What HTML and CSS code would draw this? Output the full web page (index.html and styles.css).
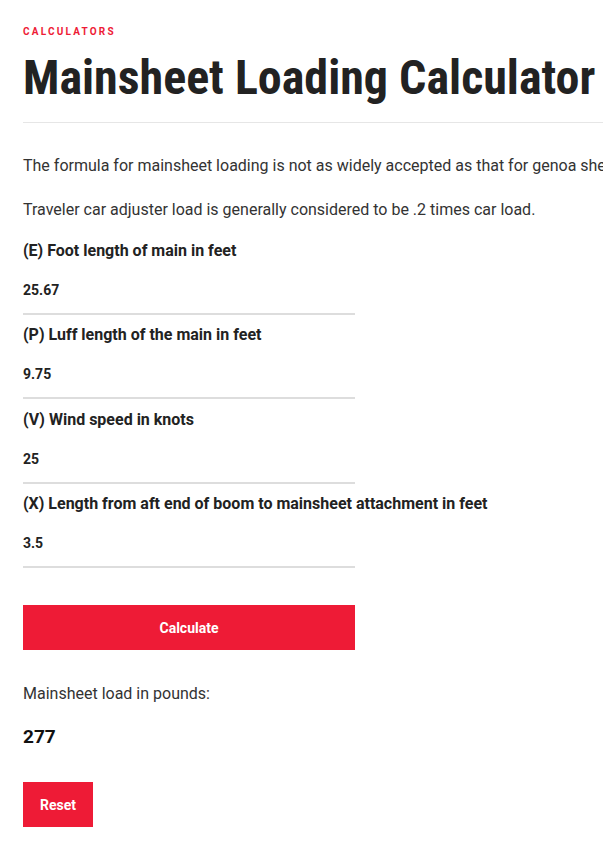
FILE: index.html
```html
<!DOCTYPE html>
<html lang="en">
<head>
<meta charset="utf-8">
<title>Mainsheet Loading Calculator</title>
<link rel="stylesheet" href="styles.css">
</head>
<body>
<main class="page">
  <div class="eyebrow">CALCULATORS</div>
  <h1 class="title">Mainsheet Loading Calculator</h1>
  <hr class="rule">
  <p class="text nowrap">The formula for mainsheet loading is not as widely accepted as that for genoa sheet loading, but it is a reasonable guide.</p>
  <p class="text">Traveler car adjuster load is generally considered to be .2 times car load.</p>
  <form class="calc">
    <div class="field">
      <label class="label">(E) Foot length of main in feet</label>
      <div class="input">25.67</div>
    </div>
    <div class="field">
      <label class="label">(P) Luff length of the main in feet</label>
      <div class="input">9.75</div>
    </div>
    <div class="field">
      <label class="label">(V) Wind speed in knots</label>
      <div class="input">25</div>
    </div>
    <div class="field">
      <label class="label">(X) Length from aft end of boom to mainsheet attachment in feet</label>
      <div class="input">3.5</div>
    </div>
    <div class="btn btn-wide">Calculate</div>
  </form>
  <p class="text result-label">Mainsheet load in pounds:</p>
  <div class="result">277</div>
  <div class="btn btn-small">Reset</div>
</main>
</body>
</html>
```
FILE: styles.css
```css
html, body {
  margin: 0;
  padding: 0;
  overflow: hidden;
  background: #fff;
}
.page {
  padding: 25px 0 0 23px;
  font-family: Roboto, "Liberation Sans", sans-serif;
  color: #333;
}
.eyebrow {
  font-size: 10px;
  font-weight: 700;
  letter-spacing: 2.2px;
  color: #ee1b36;
  line-height: 14px;
}
.title {
  margin: 11px 0 0;
  font-size: 48px;
  font-weight: 700;
  font-stretch: 75%;
  line-height: 56px;
  color: #222;
  white-space: nowrap;
}
.rule {
  margin: 16px 0 0;
  border: 0;
  border-top: 1px solid #e6e6e6;
  height: 0;
}
.text {
  margin: 31px 0 0;
  font-size: 16px;
  font-weight: 400;
  line-height: 24px;
  color: #333;
}
.text + .text { margin-top: 20px; }
.nowrap { white-space: nowrap; }
.calc {
  width: 332px;
  display: flex;
  flex-direction: column;
  padding-top: 9px;
}
.field {
  display: flex;
  flex-direction: column;
  padding-top: 10.4px;
}
.field:first-child { padding-top: 10px; }
.label {
  font-size: 16px;
  font-weight: 700;
  color: #222;
  line-height: 20px;
  white-space: nowrap;
}
.input {
  font-size: 14px;
  font-weight: 700;
  color: #222;
  line-height: 20px;
  padding: 19px 0 13px;
  border-bottom: 2px solid #ddd;
}
.btn {
  background: #ee1b36;
  color: #fff;
  font-size: 14px;
  font-weight: 700;
  height: 45px;
  display: flex;
  align-items: center;
  justify-content: center;
}
.btn-wide {
  margin-top: 37px;
}
.btn-small {
  width: 70px;
  margin-top: 33px;
}
.result-label {
  margin-top: 32px;
}
.result {
  margin-top: 19px;
  font-size: 19px;
  font-weight: 700;
  color: #111;
  line-height: 24px;
}
```
